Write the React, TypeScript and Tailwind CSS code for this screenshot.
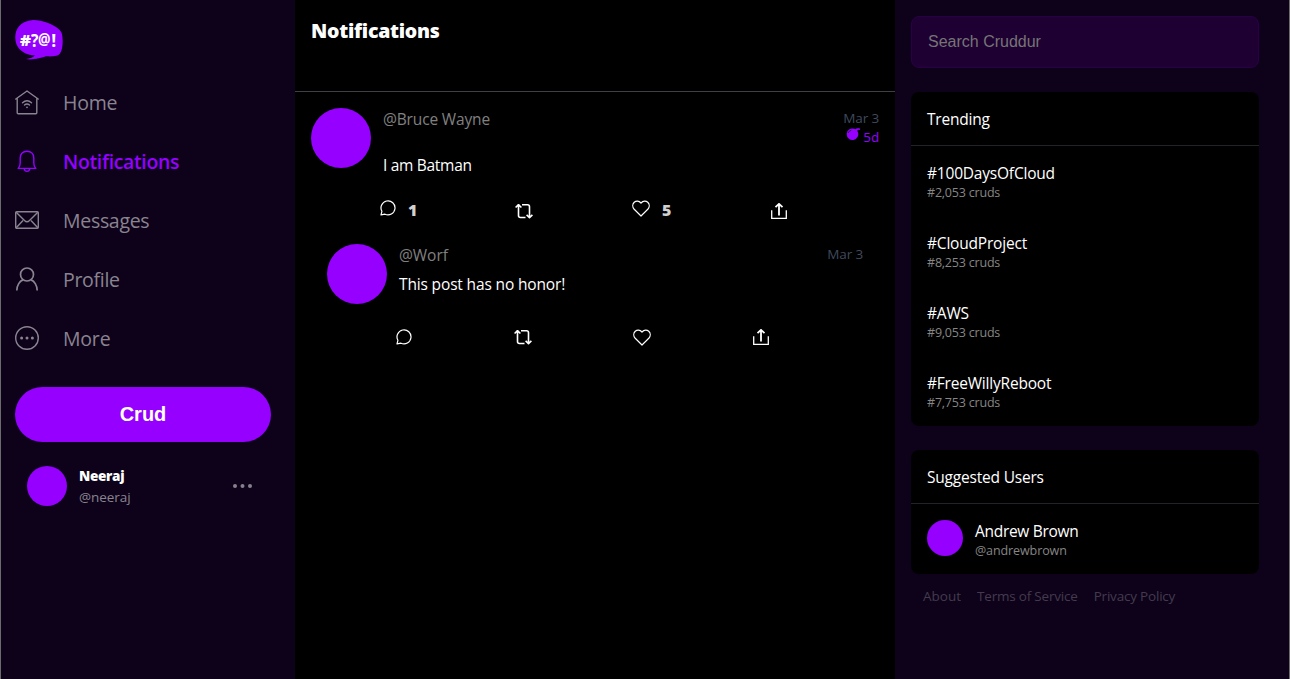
import React from 'react';

const icon = 'shrink-0 fill-none stroke-current';

function Logo() {
  return (
    <svg className="shrink-0" width="48" height="40" viewBox="0 0 48 40">
      <path
        fill="#9500ff"
        d="M18 0C29 0 43 6 46.500 12.500C48.500 19 48 29 45 33.500C43 36.700 37 36.500 31 36.300C27 37.500 17 40.500 11 39C15 38.500 18 37.500 20 35.500C11 35 3.500 31 1 23C-1.500 13 2 1.500 18 0Z"
      />
      <g fill="#fff" fontFamily="Open Sans, sans-serif" fontSize="16">
        <text x="5" y="26" fontWeight="800" fontSize="15.500" textLength="11" lengthAdjust="spacingAndGlyphs">#</text>
        <text x="16" y="26.500" fontWeight="700" fontSize="17.500" textLength="7.500" lengthAdjust="spacingAndGlyphs">?</text>
        <text x="23" y="25" fontWeight="700" fontSize="15.500" textLength="12.500" lengthAdjust="spacingAndGlyphs">@</text>
        <text x="36.300" y="26.500" fontWeight="700" fontSize="18" textLength="5" lengthAdjust="spacingAndGlyphs">!</text>
      </g>
    </svg>
  );
}

function HomeIcon() {
  return (
    <svg className={icon} width="24" height="26" viewBox="0 0 24 26" strokeWidth="1.400" strokeLinejoin="round" strokeLinecap="round">
      <path d="M.8 9L12 1L23.200 9M2.200 8.300V22.700Q2.200 23.700 3.200 23.700H20.800Q21.800 23.700 21.800 22.700V8.300" />
      <path d="M7.500 12.700Q12 8.700 16.500 12.700M9.500 15Q12 12.900 14.500 15" />
      <circle cx="12" cy="17.300" r=".9" fill="currentColor" stroke="none" />
    </svg>
  );
}

function BellIcon() {
  return (
    <svg className={icon} width="24" height="24" viewBox="0 0 24 24" strokeWidth="1.400" strokeLinejoin="round" strokeLinecap="round">
      <path d="M3.200 18.400C4.700 17 5.200 15.500 5.200 13V8C5.200 3.800 8 1.200 12 1.200S18.800 3.800 18.800 8V13C18.800 15.500 19.300 17 20.800 18.400ZM9.200 18.500C9.500 22.300 14.500 22.300 14.800 18.500" />
    </svg>
  );
}

function MailIcon() {
  return (
    <svg className={`${icon} mb-px`} width="24" height="18" viewBox="0 0 24 18" strokeWidth="1.400" strokeLinejoin="round">
      <rect x=".7" y=".7" width="22.600" height="16.600" rx="1" />
      <path d="M1.200 1.200L9.500 9.500Q12 12 14.500 9.500L22.800 1.200M1.200 16.800L8 9.500M22.800 16.800L16 9.500" />
    </svg>
  );
}

function ProfileIcon() {
  return (
    <svg className={`${icon} mb-px`} width="24" height="24" viewBox="0 0 24 24" strokeWidth="1.700">
      <circle cx="12" cy="7.500" r="6.500" />
      <path d="M1.800 23.500C1.800 18.500 4.500 14.200 8 12.900M22.200 23.500C22.200 18.500 19.500 14.200 16 12.900" />
    </svg>
  );
}

function MoreIcon() {
  return (
    <svg className={`${icon} mb-px`} width="24" height="24" viewBox="0 0 24 24" strokeWidth="1.400">
      <circle cx="12" cy="12" r="11.300" />
      <g fill="currentColor" stroke="none">
        <circle cx="6.600" cy="12" r="1.500" />
        <circle cx="12" cy="12" r="1.500" />
        <circle cx="17.400" cy="12" r="1.500" />
      </g>
    </svg>
  );
}

function CommentIcon() {
  return (
    <svg className={icon} width="16" height="16" viewBox="0 0 16 16" strokeWidth="1.200" strokeLinejoin="round">
      <path d="M1 14.900L1.900 11.300A7 7 0 1 1 5 14.200Z" />
    </svg>
  );
}

function RepostIcon() {
  return (
    <svg className={icon} width="18" height="15" viewBox="0 0 18 15" strokeWidth="1.600" strokeLinejoin="round">
      <path d="M3.500 .8V11.500Q3.500 13.500 5.500 13.500H10.500M.6 3.500L3.500.7L6.400 3.500M7 .8H12.500Q14.500 .8 14.500 2.800V13.500M11.600 10.800L14.500 13.600L17.400 10.800" />
    </svg>
  );
}

function HeartIcon() {
  return (
    <svg className={icon} width="18" height="17" viewBox="0 0 18 17" strokeWidth="1.200" strokeLinejoin="round">
      <path d="M9 16L2.200 9.300C-2.200 4.200 4.500-2.300 9 3C13.500-2.300 20.200 4.200 15.800 9.300Z" />
    </svg>
  );
}

function ShareIcon() {
  return (
    <svg className={icon} width="16" height="17" viewBox="0 0 16 17" strokeWidth="1.300">
      <path d="M.7 7.300V15.300H15.300V7.300" />
      <path strokeWidth="1.800" d="M8 12.500V1M4.500 4.200L8 .9L11.500 4.200" />
    </svg>
  );
}

function BombIcon() {
  return (
    <svg className="shrink-0" width="14" height="13" viewBox="0 0 14 13">
      <path fill="#9500ff" d="M8.500 .8L9.500 1.300C10.500 0 12 0 14 .4V1.900C12.700 1.600 11.800 1.800 11.200 2.700L11.700 3.700A5.800 5.800 0 1 1 8.500 .8Z" />
      <path fill="none" stroke="#000" strokeWidth=".7" d="M2 5Q3 2.800 5.200 2.300" />
    </svg>
  );
}

const nav = [
  { label: 'Home', Icon: HomeIcon, style: 'tracking-[-0.2px]' },
  { label: 'Notifications', Icon: BellIcon, style: 'font-semibold text-[#9500ff] tracking-[-0.35px]' },
  { label: 'Messages', Icon: MailIcon, style: 'tracking-[-0.3px]' },
  { label: 'Profile', Icon: ProfileIcon, style: 'tracking-[-0.3px]' },
  { label: 'More', Icon: MoreIcon, style: 'tracking-[-0.2px]' },
];

const trends = [
  { tag: '#100DaysOfCloud', count: '2,053' },
  { tag: '#CloudProject', count: '8,253' },
  { tag: '#AWS', count: '9,053' },
  { tag: '#FreeWillyReboot', count: '7,753' },
];

function Sidebar() {
  return (
    <nav className="flex w-[294px] shrink-0 flex-col pt-5 pl-[14px]">
      <Logo />
      <ul className="mt-[13px] text-[19.5px] text-[#8a8490]">
        {nav.map(({ label, Icon, style }) => (
          <li key={label} className={`flex h-[59px] items-center gap-6 ${style}`}>
            <Icon />
            <span>{label}</span>
          </li>
        ))}
      </ul>
      <button className="mt-[19px] h-[55px] w-64 rounded-full bg-[#9500ff] pb-0.5 font-['Liberation_Sans',sans-serif] text-xl font-bold text-white">
        Crud
      </button>
      <div className="mt-6 flex w-64 items-center pr-[19px] pl-3">
        <div className="size-10 rounded-full bg-[#9500ff]" />
        <div className="ml-3 grow">
          <div className="text-[13.5px] leading-5 font-extrabold tracking-[-0.3px] text-white">Neeraj</div>
          <div className="h-5 pt-px text-[13.5px] leading-5 tracking-[-0.05px] text-[#8a8490]">@neeraj</div>
        </div>
        <svg className="fill-[#86808d]" width="19" height="4" viewBox="0 0 19 4">
          <circle cx="2" cy="2" r="2" />
          <circle cx="9.500" cy="2" r="2" />
          <circle cx="17" cy="2" r="2" />
        </svg>
      </div>
    </nav>
  );
}

function Feed() {
  return (
    <main className="w-[600px] shrink-0 bg-black">
      <header className="h-[92px] border-b border-[#3f3f46] px-4 pt-[17px]">
        <h1 className="text-[19.5px] leading-7 font-extrabold tracking-[-0.25px] text-white">Notifications</h1>
      </header>
      <article className="flex h-[136px] px-4 pt-4">
        <div className="size-[60px] shrink-0 rounded-full bg-[#9500ff]" />
        <div className="ml-3 grow">
          <div className="flex h-[46px] justify-between">
            <span className="text-[15.5px] leading-[22px] tracking-[-0.15px] text-[#808080]">@Bruce Wayne</span>
            <div className="flex flex-col items-end pt-px text-[13.5px] leading-[19px] tracking-[-0.15px]">
              <span className="text-[#3f4a5c]">Mar 3</span>
              <span className="flex gap-[3px] text-[#9500ff]">
                <BombIcon />
                5d
              </span>
            </div>
          </div>
          <p className="h-6 text-[15.5px] leading-[22px] tracking-[-0.3px] text-white">I am Batman</p>
          <div className="mt-[22px] -ml-[3px] flex h-5 items-start text-base leading-5 font-extrabold text-white">
            <div className="flex w-[135px] gap-3"><CommentIcon /><span className="text-[#d0d0d0]">1</span></div>
            <div className="flex w-[117px] pt-1"><RepostIcon /></div>
            <div className="flex w-[139px] gap-3"><HeartIcon /><span className="text-[#d0d0d0]">5</span></div>
            <div className="pt-[3px]"><ShareIcon /></div>
          </div>
        </div>
      </article>
      <article className="flex px-8 pt-4">
        <div className="size-[60px] shrink-0 rounded-full bg-[#9500ff]" />
        <div className="ml-3 grow">
          <div className="flex h-[29px] justify-between">
            <span className="text-[15.5px] leading-[22px] tracking-[-0.05px] text-[#808080]">@Worf</span>
            <span className="pt-px text-[13.5px] leading-[19px] tracking-[-0.15px] text-[#3f4a5c]">Mar 3</span>
          </div>
          <p className="h-6 text-[15.5px] leading-[22px] tracking-[-0.15px] text-white">This post has no honor!</p>
          <div className="mt-8 -ml-[3px] flex items-start text-white">
            <div className="w-[118px]"><CommentIcon /></div>
            <div className="w-[119px] pt-px"><RepostIcon /></div>
            <div className="w-[120px]"><HeartIcon /></div>
            <ShareIcon />
          </div>
        </div>
      </article>
    </main>
  );
}

function Card({ title, className, children }: { title: string; className: string; children: React.ReactNode }) {
  return (
    <section className={`rounded-lg bg-black text-white ${className}`}>
      <h2 className="h-[54px] border-b border-[#202328] px-4 pt-4 text-[15.5px] leading-[23px] tracking-[-0.2px]">{title}</h2>
      {children}
    </section>
  );
}

function Aside() {
  return (
    <aside className="flex grow flex-col pt-4 pr-[30px] pl-4">
      <input
        className="h-[52px] rounded-lg border border-[#290047] bg-[#1f0033] px-4 font-['Liberation_Sans',sans-serif] text-base placeholder:text-[#757575]"
        placeholder="Search Cruddur"
      />
      <Card title="Trending" className="mt-6">
        {trends.map(({ tag, count }) => (
          <div key={tag} className="h-[70px] px-4 pt-4">
            <div className="text-[15.5px] leading-[22px] tracking-[-0.2px]">{tag}</div>
            <div className="pt-px text-[12.5px] leading-4 tracking-[-0.2px] text-[#868686]">#{count} cruds</div>
          </div>
        ))}
      </Card>
      <Card title="Suggested Users" className="mt-6">
        <div className="flex h-[70px] px-4 pt-4">
          <div className="size-9 rounded-full bg-[#9500ff]" />
          <div className="ml-3">
            <div className="text-[15.5px] leading-[22px] tracking-[-0.3px]">Andrew Brown</div>
            <div className="pt-px text-[12.5px] leading-4 tracking-[-0.1px] text-[#868686]">@andrewbrown</div>
          </div>
        </div>
      </Card>
      <footer className="mt-3 flex gap-4 pl-3 text-[13.5px] leading-5 tracking-[-0.2px] text-[#433b4d]">
        <span className="tracking-normal">About</span>
        <span>Terms of Service</span>
        <span>Privacy Policy</span>
      </footer>
    </aside>
  );
}

export default function App() {
  return (
    <div className="flex h-[679px] w-[1290px] overflow-hidden border-x border-[#6b6b6b] bg-[#0d021a] font-['Open_Sans','Noto_Sans',sans-serif]">
      <Sidebar />
      <Feed />
      <Aside />
    </div>
  );
}
